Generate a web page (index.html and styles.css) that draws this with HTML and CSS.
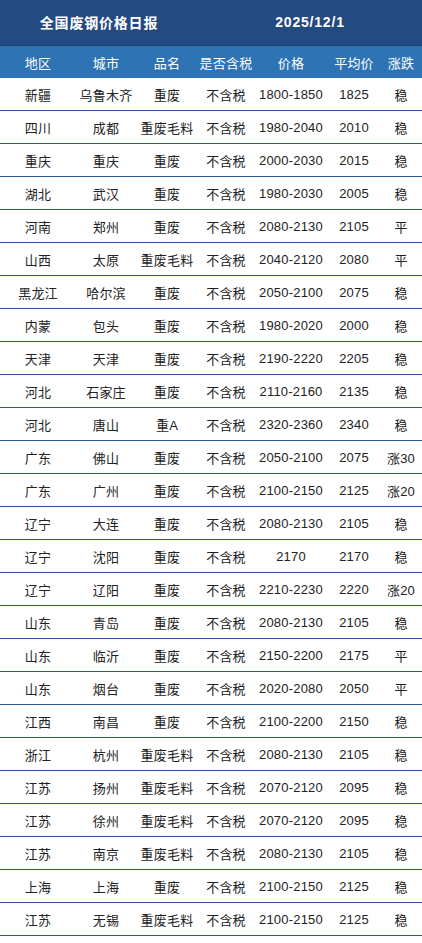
FILE: index.html
```html
<!DOCTYPE html>
<html lang="zh-CN">
<head>
<meta charset="utf-8">
<link rel="stylesheet" href="styles.css">
</head>
<body>
<div class="sheet">
  <div class="title-row">
    <div class="title">全国废钢价格日报</div>
    <div class="date">2025/12/1</div>
  </div>
  <div class="row head">
    <div>地区</div><div>城市</div><div>品名</div><div>是否含税</div><div>价格</div><div>平均价</div><div>涨跌</div>
  </div>
  <div class="row"><div>新疆</div><div>乌鲁木齐</div><div>重废</div><div>不含税</div><div>1800-1850</div><div>1825</div><div>稳</div></div>
  <div class="row"><div>四川</div><div>成都</div><div>重废毛料</div><div>不含税</div><div>1980-2040</div><div>2010</div><div>稳</div></div>
  <div class="row"><div>重庆</div><div>重庆</div><div>重废</div><div>不含税</div><div>2000-2030</div><div>2015</div><div>稳</div></div>
  <div class="row"><div>湖北</div><div>武汉</div><div>重废</div><div>不含税</div><div>1980-2030</div><div>2005</div><div>稳</div></div>
  <div class="row"><div>河南</div><div>郑州</div><div>重废</div><div>不含税</div><div>2080-2130</div><div>2105</div><div>平</div></div>
  <div class="row"><div>山西</div><div>太原</div><div>重废毛料</div><div>不含税</div><div>2040-2120</div><div>2080</div><div>平</div></div>
  <div class="row"><div>黑龙江</div><div>哈尔滨</div><div>重废</div><div>不含税</div><div>2050-2100</div><div>2075</div><div>稳</div></div>
  <div class="row"><div>内蒙</div><div>包头</div><div>重废</div><div>不含税</div><div>1980-2020</div><div>2000</div><div>稳</div></div>
  <div class="row"><div>天津</div><div>天津</div><div>重废</div><div>不含税</div><div>2190-2220</div><div>2205</div><div>稳</div></div>
  <div class="row"><div>河北</div><div>石家庄</div><div>重废</div><div>不含税</div><div>2110-2160</div><div>2135</div><div>稳</div></div>
  <div class="row"><div>河北</div><div>唐山</div><div>重A</div><div>不含税</div><div>2320-2360</div><div>2340</div><div>稳</div></div>
  <div class="row"><div>广东</div><div>佛山</div><div>重废</div><div>不含税</div><div>2050-2100</div><div>2075</div><div>涨30</div></div>
  <div class="row"><div>广东</div><div>广州</div><div>重废</div><div>不含税</div><div>2100-2150</div><div>2125</div><div>涨20</div></div>
  <div class="row"><div>辽宁</div><div>大连</div><div>重废</div><div>不含税</div><div>2080-2130</div><div>2105</div><div>稳</div></div>
  <div class="row"><div>辽宁</div><div>沈阳</div><div>重废</div><div>不含税</div><div>2170</div><div>2170</div><div>稳</div></div>
  <div class="row"><div>辽宁</div><div>辽阳</div><div>重废</div><div>不含税</div><div>2210-2230</div><div>2220</div><div>涨20</div></div>
  <div class="row"><div>山东</div><div>青岛</div><div>重废</div><div>不含税</div><div>2080-2130</div><div>2105</div><div>稳</div></div>
  <div class="row"><div>山东</div><div>临沂</div><div>重废</div><div>不含税</div><div>2150-2200</div><div>2175</div><div>平</div></div>
  <div class="row"><div>山东</div><div>烟台</div><div>重废</div><div>不含税</div><div>2020-2080</div><div>2050</div><div>平</div></div>
  <div class="row"><div>江西</div><div>南昌</div><div>重废</div><div>不含税</div><div>2100-2200</div><div>2150</div><div>稳</div></div>
  <div class="row"><div>浙江</div><div>杭州</div><div>重废毛料</div><div>不含税</div><div>2080-2130</div><div>2105</div><div>稳</div></div>
  <div class="row"><div>江苏</div><div>扬州</div><div>重废毛料</div><div>不含税</div><div>2070-2120</div><div>2095</div><div>稳</div></div>
  <div class="row"><div>江苏</div><div>徐州</div><div>重废毛料</div><div>不含税</div><div>2070-2120</div><div>2095</div><div>稳</div></div>
  <div class="row"><div>江苏</div><div>南京</div><div>重废毛料</div><div>不含税</div><div>2080-2130</div><div>2105</div><div>稳</div></div>
  <div class="row"><div>上海</div><div>上海</div><div>重废</div><div>不含税</div><div>2100-2150</div><div>2125</div><div>稳</div></div>
  <div class="row"><div>江苏</div><div>无锡</div><div>重废毛料</div><div>不含税</div><div>2100-2150</div><div>2125</div><div>稳</div></div>
</div>
</body>
</html>
```

FILE: styles.css
```css
html, body {
  margin: 0;
  padding: 0;
  background: #ffffff;
}
body {
  font-family: "Liberation Sans", "Noto Sans CJK SC", sans-serif;
  color: #222222;
}
.sheet {
  width: 422px;
}
.title-row {
  display: grid;
  grid-template-columns: 198px 224px;
  height: 45px;
  background: #244a82;
  color: #ffffff;
  font-weight: bold;
  font-size: 14px;
  letter-spacing: 0.8px;
}
.title-row > div {
  display: flex;
  align-items: center;
  justify-content: center;
  padding-bottom: 1px;
}
.row {
  display: grid;
  grid-template-columns: 76px 60px 62px 56px 74px 52px 42px;
  height: 32px;
  border-bottom: 1px solid #2f5597;
  font-size: 13px;
  letter-spacing: 0.2px;
}
.row > div {
  display: flex;
  align-items: center;
  justify-content: center;
  white-space: nowrap;
}
.row.head {
  border-top: 1px solid #1d3f73;
  border-bottom: none;
  background: #2e74b5;
  color: #ffffff;
  height: 32px;
}
```
